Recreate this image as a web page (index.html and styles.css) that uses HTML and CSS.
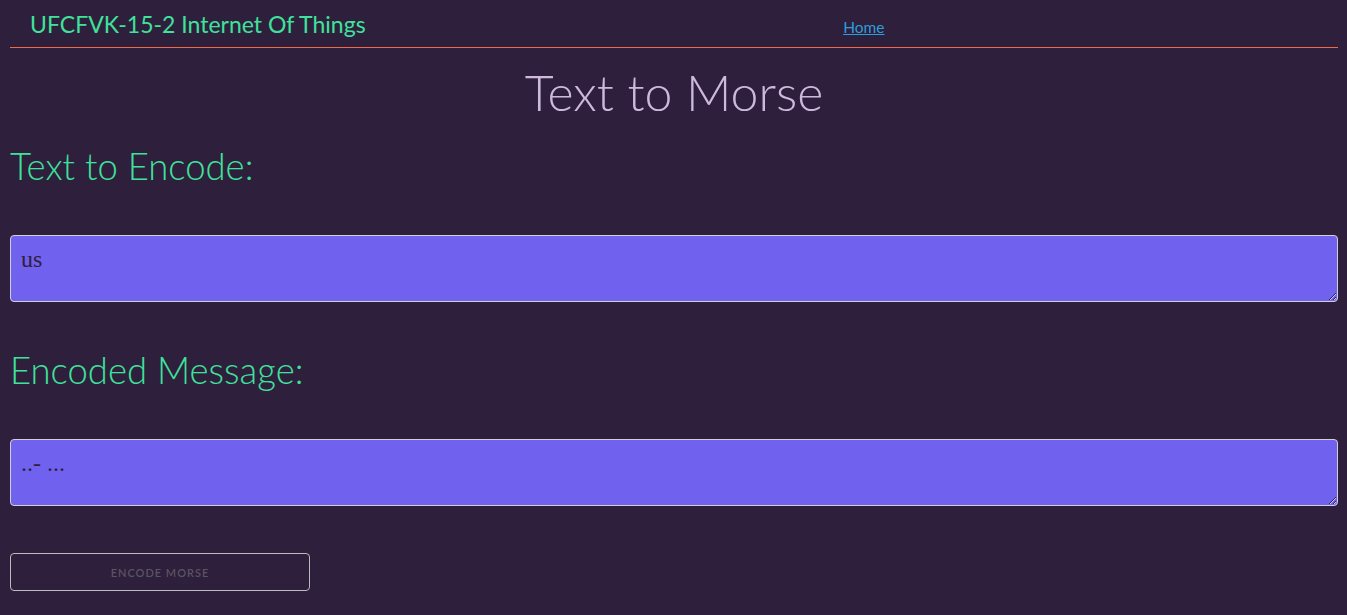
FILE: index.html
```html
<!DOCTYPE html>
<html lang="en">
<head>
<meta charset="utf-8">
<title>Text to Morse</title>
<link rel="stylesheet" href="styles.css">
</head>
<body>
<div class="page">
  <header class="topbar">
    <div class="brand">UFCFVK-15-2 Internet Of Things</div>
    <nav class="nav"><a href="#" class="nav-link">Home</a></nav>
  </header>
  <h1 class="title">Text to Morse</h1>
  <h2 class="label">Text to Encode:</h2>
  <textarea class="field">us</textarea>
  <h2 class="label label-second">Encoded Message:</h2>
  <textarea class="field">..- ...</textarea>
  <button class="btn" type="button">Encode Morse</button>
</div>
</body>
</html>
```
FILE: styles.css
```css
html, body {
  margin: 0;
  padding: 0;
  background: #2e1f3c;
}
body {
  font-family: Lato, "Open Sans", sans-serif;
}
.page {
  padding: 0 9px 0 10px;
}
.topbar {
  display: flex;
  align-items: baseline;
  height: 48px;
  box-sizing: border-box;
  padding-top: 9px;
  border-bottom: 1px solid #ee6a48;
}
.brand {
  padding-left: 20px;
  font-size: 23px;
  line-height: 30px;
  font-weight: 400;
  color: #3fe29b;
}
.nav {
  flex: 1;
  text-align: center;
  padding-left: 24px;
}
.nav-link {
  font-size: 15.5px;
  color: #2c9ed8;
  text-decoration: underline;
}
.title {
  margin: 13px 0 0;
  text-align: center;
  font-size: 50px;
  line-height: 62px;
  font-weight: 300;
  color: #cdb9dc;
}
.label {
  margin: 21px 0 0;
  font-size: 36.5px;
  line-height: 44px;
  font-weight: 300;
  color: #3fe29b;
}
.label-second {
  margin-top: 46px;
}
.field {
  display: block;
  box-sizing: border-box;
  width: 100%;
  height: 67px;
  margin-top: 47px;
  padding: 10px 10px 6px;
  background: #7161ef;
  border: 1px solid #d1d1d1;
  border-radius: 4px;
  font-family: "Liberation Serif", serif;
  font-size: 24px;
  color: #2e1f3c;
}
.btn {
  display: block;
  width: 300px;
  height: 38px;
  margin-top: 47px;
  padding: 0;
  background: transparent;
  border: 1px solid #bbbbbb;
  border-radius: 4px;
  font-family: Lato, sans-serif;
  font-size: 11px;
  font-weight: 600;
  letter-spacing: 1px;
  text-transform: uppercase;
  color: #5b5461;
}
```
